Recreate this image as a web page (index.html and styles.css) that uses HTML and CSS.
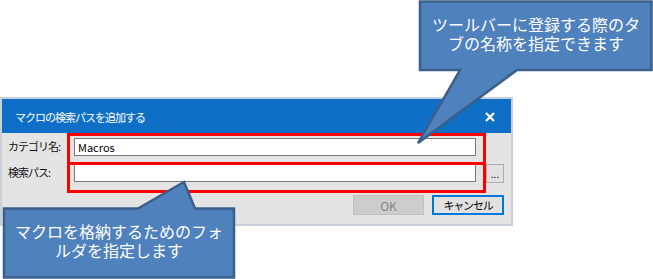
FILE: index.html
```html
<!DOCTYPE html>
<html lang="ja">
<head>
<meta charset="utf-8">
<link rel="stylesheet" href="styles.css">
</head>
<body>
<div class="page">
  <div class="dialog">
    <div class="titlebar">
      <span class="title">マクロの検索パスを追加する</span>
      <svg class="close" width="10" height="10" viewBox="0 0 10 10"><path d="M1 1 L9 9 M9 1 L1 9" stroke="#fff" stroke-width="2.2"/></svg>
    </div>
    <div class="body">
      <div class="row">
        <span class="label">カテゴリ名:</span>
        <div class="input">Macros</div>
      </div>
      <div class="row row2">
        <span class="label">検索パス:</span>
        <div class="input"></div>
        <div class="browse">...</div>
      </div>
      <div class="buttons">
        <div class="btn ok">OK</div>
        <div class="btn cancel">キャンセル</div>
      </div>
    </div>
  </div>

  <div class="redbox"><div class="divider"></div></div>

  <svg class="callout-shape" width="653" height="279" viewBox="0 0 653 279">
    <path d="M420 1.5 H651.5 V70 H517 L418 143 L460 70 H420 Z" fill="#4f81bd" stroke="#3b5f8b" stroke-width="2.5" stroke-linejoin="miter"/>
    <path d="M4 208.5 H138 L184 182 L195 208.5 H234 V277.5 H4 Z" fill="#4f81bd" stroke="#3b5f8b" stroke-width="2.5" stroke-linejoin="miter"/>
  </svg>
  <div class="callout-text top">ツールバーに登録する際のタ<br>ブの名称を指定できます</div>
  <div class="callout-text bottom">マクロを格納するためのフォ<br>ルダを指定します</div>
</div>
</body>
</html>
```

FILE: styles.css
```css
html, body {
  margin: 0;
  padding: 0;
  background: #ffffff;
}
.page {
  position: relative;
  width: 653px;
  height: 279px;
  overflow: hidden;
  font-family: "Noto Sans CJK JP", "Noto Sans", sans-serif;
}
.dialog {
  margin-top: 97px;
  width: 509px;
  height: 125px;
  border: 2px solid #c9d0da;
  background: #e4e4e4;
  display: flex;
  flex-direction: column;
}
.titlebar {
  height: 34px;
  background: #0f6fc6;
  display: flex;
  align-items: center;
  justify-content: space-between;
  padding: 0 16px 0 13px;
}
.title {
  color: #ffffff;
  font-size: 11px;
  letter-spacing: -1px;
  line-height: 14px;
  margin-top: 2px;
}
.close {
  display: block;
  margin-top: 2px;
}
.body {
  flex: 1;
  display: flex;
  flex-direction: column;
  padding: 5px 7px 0 6px;
}
.row {
  display: flex;
  align-items: flex-start;
  height: 18px;
}
.row2 {
  margin-top: 8px;
  height: 19px;
}
.label {
  width: 66px;
  font-size: 11px;
  letter-spacing: -1px;
  line-height: 16px;
  color: #111;
}
.input {
  height: 16px;
  border: 1px solid #7a7a7a;
  background: #ffffff;
  font-size: 11px;
  line-height: 16px;
  padding-left: 3px;
  box-sizing: content-box;
  width: 397px;
  color: #000;
}
.browse {
  margin-left: 10px;
  width: 16px;
  height: 17px;
  border: 1px solid #adadad;
  background: #e1e1e1;
  font-size: 10px;
  line-height: 17px;
  text-align: center;
  color: #000;
}
.buttons {
  display: flex;
  justify-content: flex-end;
  gap: 8px;
  margin-top: 12px;
}
.btn {
  height: 20px;
  box-sizing: border-box;
  font-size: 11px;
  display: flex;
  align-items: center;
  justify-content: center;
}
.ok {
  width: 71px;
  background: #cccccc;
  border: 1px solid #bfbfbf;
  color: #838383;
  font-size: 12px;
}
.cancel {
  width: 72px;
  background: #e1e1e1;
  border: 2px solid #0078d7;
  color: #000;
  letter-spacing: -1.2px;
}
.redbox {
  position: absolute;
  left: 67px;
  top: 133px;
  width: 419px;
  height: 60px;
  box-sizing: border-box;
  border: 3px solid #ff0000;
}
.divider {
  position: absolute;
  left: 0;
  right: 0;
  top: 26px;
  height: 3px;
  background: #ff0000;
}
.callout-shape {
  position: absolute;
  left: 0;
  top: 0;
}
.callout-text {
  position: absolute;
  color: #ffffff;
  font-size: 16px;
  line-height: 19px;
  text-align: center;
}
.callout-text.top {
  left: 420px;
  top: 15px;
  width: 232px;
}
.callout-text.bottom {
  left: 4px;
  top: 222px;
  width: 230px;
}
```
